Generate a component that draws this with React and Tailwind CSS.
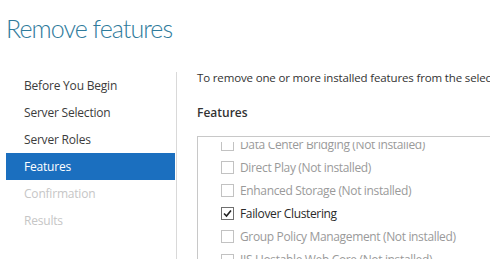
import React from 'react';

const steps = [
  { label: 'Before You Begin', state: 'done' },
  { label: 'Server Selection', state: 'done' },
  { label: 'Server Roles', state: 'done' },
  { label: 'Features', state: 'active' },
  { label: 'Confirmation', state: 'disabled' },
  { label: 'Results', state: 'disabled' },
];

const features = [
  { label: 'Data Center Bridging (Not installed)', checked: false },
  { label: 'Direct Play (Not installed)', checked: false },
  { label: 'Enhanced Storage (Not installed)', checked: false },
  { label: 'Failover Clustering', checked: true },
  { label: 'Group Policy Management (Not installed)', checked: false },
  { label: 'IIS Hostable Web Core (Not installed)', checked: false },
];

const Checkbox = ({ checked }) => (
  <span
    className={`w-[13px] h-[13px] shrink-0 border bg-white flex items-center justify-center ${
      checked ? 'border-[#6f6f6f]' : 'border-[#c2c2c2]'
    }`}
  >
    {checked && (
      <svg width="11" height="11" viewBox="0 0 11 11">
        <path d="M2 5.5 L4.5 8 L9 2.5" fill="none" stroke="#222" strokeWidth="1.6" />
      </svg>
    )}
  </span>
);

const App = () => {
  return (
    <div className="w-[490px] h-[259px] bg-white overflow-hidden font-['Open_Sans',sans-serif]">
      <h1 className="pl-[6px] pt-[13px] h-[72px] font-['Lato',sans-serif] text-[25px] font-light leading-[30px] tracking-[-0.95px] text-[#2f7b9c]">
        Remove features
      </h1>

      <div className="flex h-[187px]">
        <div className="w-[177px] shrink-0 border-r border-[#d9d9d9] pl-[6px] pr-px">
          {steps.map((step) => (
            <div
              key={step.label}
              className={`h-[27px] pl-[18px] flex items-center text-[12px] tracking-[-0.2px] ${
                step.state === 'active'
                  ? 'bg-[#1b6fbf] text-white'
                  : step.state === 'disabled'
                  ? 'text-[#c6c6c6]'
                  : 'text-[#3c3c3c]'
              }`}
            >
              {step.label}
            </div>
          ))}
        </div>

        <div className="flex-1 pl-[20px] min-w-0">
          <p className="h-[14px] text-[11.5px] leading-[14px] tracking-[-0.15px] text-[#333] whitespace-nowrap -mt-[1px]">
            To remove one or more installed features from the selected server, select their check boxes.
          </p>
          <h2 className="mt-[20px] text-[12px] font-semibold leading-[16px] text-[#333]">Features</h2>
          <div className="mt-[15px] border-t border-l border-[#c8c8c8] h-[200px] pt-[5px]">
            <div className="h-full overflow-hidden">
              <div className="-mt-[9px] pl-[23px]">
                {features.map((f) => (
                  <div key={f.label} className="h-[23.1px] flex items-center gap-[6px]">
                    <Checkbox checked={f.checked} />
                    <span
                      className={`text-[12px] tracking-[-0.35px] whitespace-nowrap ${
                        f.checked ? 'text-[#2a2a2a]' : 'text-[#9a9a9a]'
                      }`}
                    >
                      {f.label}
                    </span>
                  </div>
                ))}
              </div>
            </div>
          </div>
        </div>
      </div>
    </div>
  );
};

export default App;
